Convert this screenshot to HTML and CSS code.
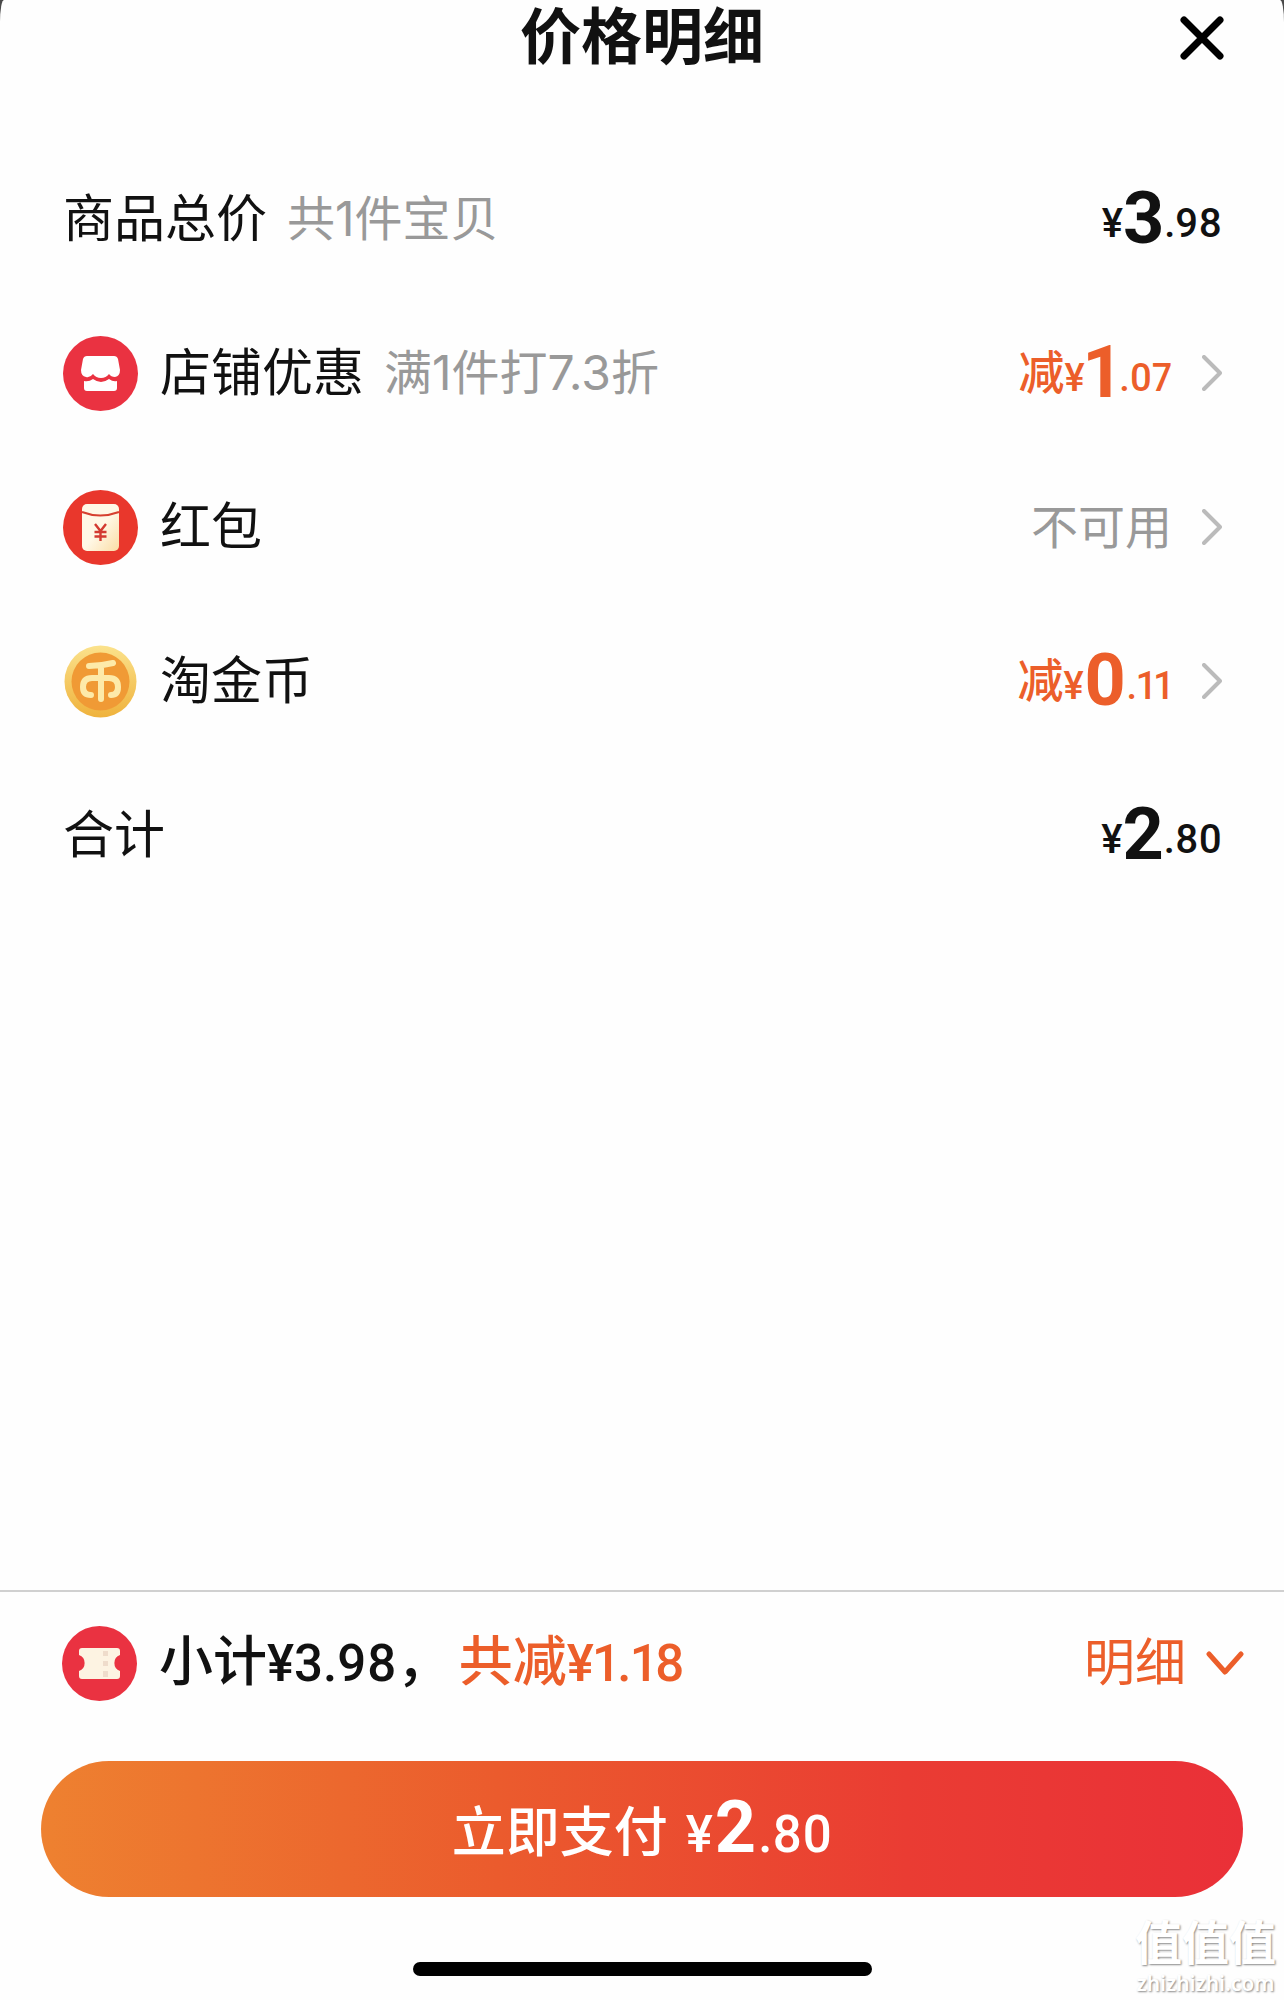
FILE: index.html
```html
<!DOCTYPE html>
<html lang="zh-CN">
<head>
  <meta charset="UTF-8">
  <meta name="viewport" content="width=device-width, initial-scale=1.0">
  <title>价格明细</title>
  <link rel="stylesheet" href="styles.css">
</head>
<body>
  <div class="sheet">
    <header class="header">
      <h1>价格明细</h1>
      <button type="button" class="close" aria-label="关闭">
        <svg width="44" height="44" viewBox="0 0 44 44"><path d="M4 4L40 40M40 4L4 40"/></svg>
      </button>
    </header>

    <main>
      <ul class="list">
        <li class="row">
          <span class="label">商品总价</span>
          <span class="note">共1件宝贝</span>
          <span class="price">¥<b>3</b>.98</span>
        </li>
        <li>
          <button type="button" class="row">
            <svg class="icon" viewBox="0 0 75 75">
              <circle cx="37.500" cy="37.500" r="37.500" fill="#ea3241"/>
              <path fill="#fff" d="M24 20h27q3 0 4 3l2 11q0 6-5 7q-4 0-6-3q-3 4-8 4t-8-4q-3 4-7 3q-5-1-5-7l2-11q1-3 4-3z"/>
              <path fill="#fff" d="M21 45q5 1 9-2q4 3 8 3t8-3q4 3 8 2v7q0 3-3 3H24q-3 0-3-3z"/>
            </svg>
            <span class="label">店铺优惠</span>
            <span class="note">满1件打7.3折</span>
            <span class="price off"><i>减</i>¥<b>1</b>.07</span>
            <svg class="arrow" viewBox="0 0 20 36"><path d="M2 2L18 18L2 34"/></svg>
          </button>
        </li>
        <li>
          <button type="button" class="row">
            <svg class="icon" viewBox="0 0 75 75">
              <defs>
                <linearGradient id="packet" x1="0" y1="0" x2="1" y2="1">
                  <stop offset="0.5" stop-color="#fff8e6"/>
                  <stop offset="1" stop-color="#fbdca5"/>
                </linearGradient>
              </defs>
              <circle cx="37.500" cy="37.500" r="37.500" fill="#e9372c"/>
              <rect x="19" y="14" width="37" height="47" rx="5" fill="url(#packet)"/>
              <path d="M19 22Q37 29 56 22" fill="none" stroke="#d6402f" stroke-width="2"/>
              <path d="M32 34l5.500 7l5.500-7M31.500 42h12M31.500 46.500h12M37.500 41v10" fill="none" stroke="#d33a31" stroke-width="2.400"/>
            </svg>
            <span class="label">红包</span>
            <span class="status">不可用</span>
            <svg class="arrow" viewBox="0 0 20 36"><path d="M2 2L18 18L2 34"/></svg>
          </button>
        </li>
        <li>
          <button type="button" class="row">
            <svg class="icon" viewBox="0 0 75 75">
              <defs>
                <linearGradient id="rim" x1="0" y1="0" x2="0" y2="1">
                  <stop offset="0" stop-color="#fbe28c"/>
                  <stop offset="1" stop-color="#efb23c"/>
                </linearGradient>
              </defs>
              <circle cx="37.500" cy="37.500" r="36" fill="url(#rim)"/>
              <circle cx="37.500" cy="37.500" r="29" fill="#f09a35"/>
              <g fill="none" stroke="#fdeaa9" stroke-width="6" stroke-linecap="round" stroke-linejoin="round">
                <path d="M26 22Q38 22 50 19M38 22V55"/>
                <path d="M28 51Q20 51 20 43Q20 34 29 34H46Q55 34 55 43Q55 51 48 51"/>
              </g>
            </svg>
            <span class="label">淘金币</span>
            <span class="price off"><i>减</i>¥<b>0</b>.11</span>
            <svg class="arrow" viewBox="0 0 20 36"><path d="M2 2L18 18L2 34"/></svg>
          </button>
        </li>
        <li class="row">
          <span class="label">合计</span>
          <span class="price">¥<b>2</b>.80</span>
        </li>
      </ul>
    </main>

    <footer class="footer">
      <div class="summary">
        <svg class="icon" viewBox="0 0 75 75">
          <circle cx="37.500" cy="37.500" r="37.500" fill="#ea3241"/>
          <path fill="#fdf3e2" d="M20 22h35q3 0 3 3v4a8.500 8.500 0 0 0 0 16v5q0 3-3 3H20q-3 0-3-3v-5a8.500 8.500 0 0 0 0-16v-4q0-3 3-3z"/>
          <path fill="#efdccb" d="M41 25h5v5h-5zM41 35h5v5h-5zM41 45h5v6h-5z"/>
        </svg>
        <p class="total">小计<span class="num">¥3.98</span>，<em>共减<span class="num">¥1.18</span></em></p>
        <button type="button" class="detail">
          明细
          <svg width="38" height="25" viewBox="0 0 38 25"><path d="M3 3L19 21L35 3"/></svg>
        </button>
      </div>
      <button type="button" class="pay">立即支付 <span class="price">¥<b>2</b>.80</span></button>
      <div class="home-bar"></div>
    </footer>

    <div class="watermark"><strong>值值值</strong><span>zhizhizhi.com</span></div>
  </div>
</body>
</html>
```
FILE: styles.css
```css
* {
  box-sizing: border-box;
}

body {
  margin: 0;
  background-color: #4a4a4a;
  color: #111;
  font-family: Inter, "Noto Sans CJK SC", sans-serif;
  line-height: 1.2;
}

button {
  padding: 0;
  border: none;
  background: none;
  color: inherit;
  font: inherit;
  cursor: pointer;
}

.sheet {
  position: relative;
  display: flex;
  flex-direction: column;
  min-height: 100vh;
  background-color: #fefefe;
  border-radius: 4px 4px 0 0 / 22px 22px 0 0;
}

.header {
  display: grid;
  grid-template-columns: 1fr auto 1fr;
  align-items: center;
  height: 76px;
  padding: 0 60px;
}

.header h1 {
  grid-column: 2;
  margin: 0;
  font-size: 61px;
  font-weight: 700;
}

.close {
  justify-self: end;
  height: 44px;
}

.close svg {
  display: block;
  fill: none;
  stroke: #000;
  stroke-width: 7;
  stroke-linecap: round;
}

.list {
  margin: 0;
  padding: 66px 0 0;
  list-style: none;
}

.row {
  display: flex;
  align-items: center;
  width: 100%;
  height: 154px;
  padding: 0 62px 0 63px;
  text-align: left;
}

.icon {
  flex: none;
  width: 75px;
  height: 75px;
  margin-right: 22px;
}

.label {
  font-size: 51px;
}

.note {
  margin-left: 20px;
  color: #999;
  font-size: 48px;
}

.price,
.status {
  margin-left: auto;
}

.price,
.total {
  font-family: Roboto, "Noto Sans CJK SC", sans-serif;
  font-weight: 500;
  font-variant-numeric: proportional-nums;
}

.price {
  font-size: 40px;
}

.price b {
  font-size: 72px;
  line-height: 72px;
  font-weight: 700;
  vertical-align: -6px;
}

.price i {
  font-size: 46px;
  font-style: normal;
  vertical-align: 2px;
}

.price.off {
  font-size: 38px;
}

.off {
  color: #ec5e2a;
}

.status {
  color: #999;
  font-size: 47px;
}

.arrow {
  flex: none;
  width: 20px;
  height: 36px;
  margin-left: 30px;
  fill: none;
  stroke: #bbb;
  stroke-width: 4;
  stroke-linecap: round;
  stroke-linejoin: round;
}

.footer {
  margin-top: auto;
  border-top: 2px solid #d0d0d0;
}

.summary {
  display: flex;
  align-items: center;
  height: 142px;
  padding: 0 40px 0 62px;
}

.total {
  margin: 0;
  font-size: 54px;
}

.total em {
  margin-left: 8px;
  color: #ec5e2a;
  font-style: normal;
}

.num {
  font-size: 51px;
}

.detail {
  display: flex;
  align-items: center;
  gap: 20px;
  margin-left: auto;
  color: #ec5e2a;
  font-size: 51px;
}

.detail svg {
  fill: none;
  stroke: #ec5e2a;
  stroke-width: 5;
  stroke-linecap: round;
  stroke-linejoin: round;
}

.pay {
  display: flex;
  align-items: center;
  justify-content: center;
  gap: 18px;
  width: calc(100% - 82px);
  height: 136px;
  margin: 27px 41px 65px;
  border-radius: 68px;
  background: linear-gradient(90deg, #ee8130, #eb5b2d 38%, #ea3c33 72%, #ea3038);
  color: #fff;
  font-family: "Noto Sans CJK SC", sans-serif;
  font-size: 54px;
  font-weight: 500;
}

.pay .price {
  margin-left: 0;
  font-size: 51px;
}

.pay .price b {
  margin: 0 2px;
  vertical-align: 0;
}

.home-bar {
  width: 459px;
  height: 14px;
  margin: 0 auto 24px;
  border-radius: 7px;
  background-color: #000;
}

.watermark {
  position: absolute;
  right: 8px;
  bottom: 4px;
  display: flex;
  flex-direction: column;
  align-items: center;
  color: #fff;
  text-shadow: 1px 1px 2px #888;
}

.watermark strong {
  font-size: 47px;
  line-height: 54px;
  font-weight: 700;
}

.watermark span {
  font-family: "Noto Sans", sans-serif;
  font-size: 21px;
  line-height: 26px;
  font-weight: 600;
}
```
